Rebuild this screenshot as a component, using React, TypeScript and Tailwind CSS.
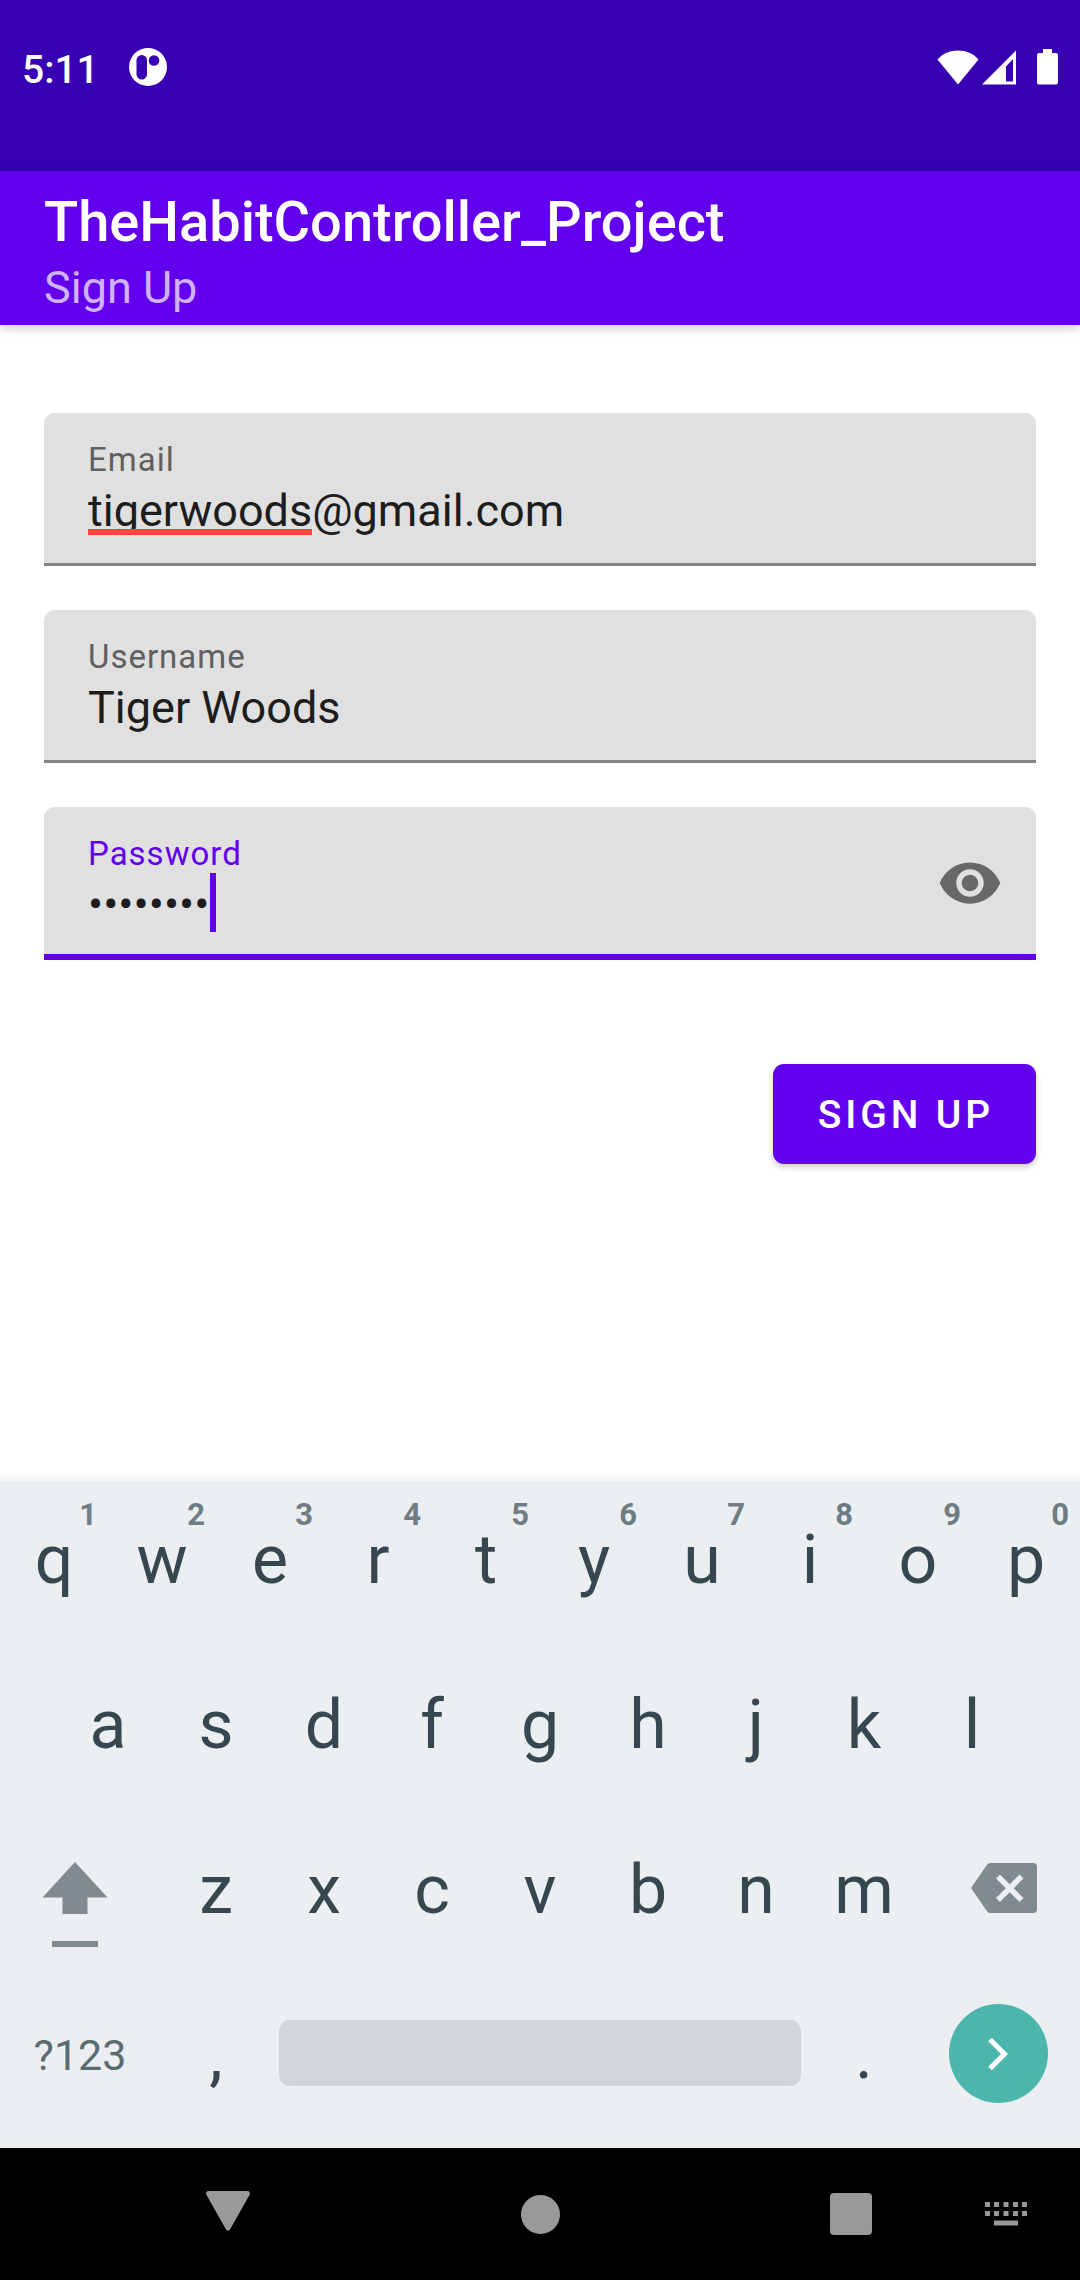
import { useState } from "react";
import type { ReactNode } from "react";

function StatusBar() {
  return (
    <div className="flex items-center bg-[#3700b3] pt-[43px] pr-[22px] pb-[80px] pl-[22px] text-white">
      <span className="pt-[6px] text-[39px] leading-[42px] font-medium">5:11</span>
      <svg className="ml-[30px] h-[38px] w-[38px]" viewBox="0 0 38 38" aria-hidden="true">
        <circle cx="19" cy="19" r="19" fill="#fff" />
        <rect x="7.5" y="7" width="10.5" height="24.5" rx="5.2" fill="#3700b3" />
        <circle cx="25" cy="12.5" r="5.3" fill="#3700b3" />
      </svg>
      <div className="ml-auto flex items-center">
        <svg className="h-[36px] w-[42px]" viewBox="0 0 42 36" aria-hidden="true">
          <path d="M21 35.5 0.5 10.5C5.500 4.500 13 1.500 21 1.500S36.500 4.500 41.500 10.500Z" fill="#fff" />
        </svg>
        <svg className="ml-[3px] h-[36px] w-[34px]" viewBox="0 0 34 36" aria-hidden="true">
          <path fillRule="evenodd" d="M34 1.500V35.500H0ZM31 10 24 17.500V32.500H31Z" fill="#fff" />
        </svg>
        <svg className="ml-[21px] h-[36px] w-[21px]" viewBox="0 0 21 36" aria-hidden="true">
          <path d="M6 0h9v4h4a2 2 0 0 1 2 2v27.500a2 2 0 0 1-2 2H2a2 2 0 0 1-2-2V6a2 2 0 0 1 2-2h4Z" fill="#fff" />
        </svg>
      </div>
    </div>
  );
}

type FieldProps = {
  id: string;
  label: string;
  type: string;
  value: string;
  onChange: (value: string) => void;
  active?: boolean;
  marker?: ReactNode;
  action?: ReactNode;
};

function Field({ id, label, type, value, onChange, active, marker, action }: FieldProps) {
  return (
    <div
      className={
        active
          ? "flex items-center rounded-t-[11px] border-b-[6px] border-[#6200ee] bg-[#e0e0e0] pr-[33px] pl-[44px]"
          : "flex items-center rounded-t-[11px] border-b-[3px] border-[#848484] bg-[#e0e0e0] px-[44px]"
      }
    >
      <div className={active ? "min-w-0 flex-1 pt-[25px] pb-[20px]" : "min-w-0 flex-1 pt-[25px] pb-[23px]"}>
        <label
          htmlFor={id}
          className={
            active
              ? "block text-[33px] leading-[44px] tracking-[1px] text-[#6200ee]"
              : "block text-[33px] leading-[44px] tracking-[1px] text-[#606060]"
          }
        >
          {label}
        </label>
        <div className="relative">
          <input
            id={id}
            type={type}
            value={value}
            spellCheck={false}
            autoComplete="off"
            onChange={(e) => onChange(e.target.value)}
            className="block h-[58px] w-full bg-transparent text-[45px] leading-[58px] text-[#1d1d1d] caret-transparent outline-none"
          />
          {marker}
        </div>
      </div>
      {action}
    </div>
  );
}

function Key({ label, hint }: { label: string; hint?: string }) {
  return (
    <button type="button" className="relative h-[165px] min-w-0 pt-[3px] text-[68px] leading-none text-[#37474f]">
      {hint && (
        <span className="absolute top-[23px] right-[11px] text-[31px] leading-[32px] font-bold text-[#6f7c82]">
          {hint}
        </span>
      )}
      {label}
    </button>
  );
}

const topRow = "qwertyuiop".split("");
const homeRow = "asdfghjkl".split("");
const bottomRow = "zxcvbnm".split("");

function Keyboard() {
  return (
    <section
      aria-label="Keyboard"
      className="bg-[#ebeff2] pb-[12px] shadow-[inset_0_5px_0_#f4f6f8,0_-1px_2px_rgba(0,0,0,0.03)]"
    >
      <div className="grid grid-cols-10">
        {topRow.map((k, i) => (
          <Key key={k} label={k} hint={String((i + 1) % 10)} />
        ))}
      </div>
      <div className="grid grid-cols-9 px-[5%]">
        {homeRow.map((k) => (
          <Key key={k} label={k} />
        ))}
      </div>
      <div className="grid grid-cols-[3fr_repeat(7,2fr)_3fr]">
        <button type="button" aria-label="Shift" className="flex items-center justify-center pt-[32px] pr-[12px]">
          <svg className="h-[86px] w-[66px]" viewBox="0 0 66 86">
            <path d="M33 0 65.500 35.500H45.500V52H20.500V35.500H0.500ZM10 79H56V85H10Z" fill="#808b8f" />
          </svg>
        </button>
        {bottomRow.map((k) => (
          <Key key={k} label={k} />
        ))}
        <button type="button" aria-label="Backspace" className="flex items-center justify-center pb-[2px] pl-[10px]">
          <svg className="h-[50px] w-[66px]" viewBox="0 0 66 50">
            <path d="M19 0H62a4 4 0 0 1 4 4V46a4 4 0 0 1-4 4H19q-2 0-3.500-2.500L0 25 15.500 2.500Q17 0 19 0Z" fill="#808b8f" />
            <path d="M27 13.500 50.500 37M50.500 13.500 27 37" stroke="#ebeff2" strokeWidth="5.5" />
          </svg>
        </button>
      </div>
      <div className="grid grid-cols-[3fr_2fr_10fr_2fr_3fr]">
        <button type="button" className="pt-[3px] pr-[2px] text-[43px] leading-none text-[#5b6b71]">
          ?123
        </button>
        <Key label="," />
        <div className="flex items-center px-[9px] pb-[2px]">
          <button type="button" aria-label="Space" className="h-[66px] w-full rounded-[11px] bg-[#d1d6d9]" />
        </div>
        <Key label="." />
        <div className="flex items-center justify-center pr-[2px]">
          <button
            type="button"
            aria-label="Next"
            className="flex size-[99px] items-center justify-center rounded-full bg-[#4db6ac]"
          >
            <svg className="h-[34px] w-[20px]" viewBox="0 0 20 34">
              <path d="M2 2.500 16.500 17 2 31.500" fill="none" stroke="#fff" strokeWidth="5" />
            </svg>
          </button>
        </div>
      </div>
    </section>
  );
}

function NavBar() {
  return (
    <nav
      aria-label="System"
      className="grid h-[132px] grid-cols-[146fr_164fr_460fr_162fr_148fr] items-center justify-items-center bg-black"
    >
      <span />
      <button type="button" aria-label="Back">
        <svg className="h-[46px] w-[46px]" viewBox="0 0 46 46">
          <path d="M3.500 0H42.500a2.500 2.500 0 0 1 2 4L25 38.500a2.300 2.300 0 0 1-4 0L1.500 4a2.500 2.500 0 0 1 2-4Z" fill="#999" />
        </svg>
      </button>
      <button type="button" aria-label="Home" className="size-[39px] rounded-full bg-[#999]" />
      <button type="button" aria-label="Recent apps" className="size-[42px] rounded-[4px] bg-[#999]" />
      <button type="button" aria-label="Switch keyboard">
        <svg className="h-[24px] w-[42px]" viewBox="0 0 42 24">
          <path
            d="M0 0h5v5H0ZM9 0h5v5H9ZM18.500 0h5v5h-5ZM28 0h5v5h-5ZM37 0h5v5h-5ZM0 9h5v5H0ZM9 9h5v5H9ZM18.500 9h5v5h-5ZM28 9h5v5h-5ZM37 9h5v5h-5ZM9 18.500h24v5H9Z"
            fill="#999"
          />
        </svg>
      </button>
    </nav>
  );
}

export default function App() {
  const [email, setEmail] = useState("tigerwoods@gmail.com");
  const [username, setUsername] = useState("Tiger Woods");
  const [password, setPassword] = useState("password");
  const [visible, setVisible] = useState(false);

  return (
    <div className="flex min-h-screen flex-col bg-white font-['Roboto',sans-serif]">
      <StatusBar />
      <header className="bg-[#6200ee] px-[44px] pt-[18px] pb-[4px] shadow-[0_3px_10px_rgba(0,0,0,0.2)]">
        <h1 className="text-[56px] leading-[66px] font-medium text-white">TheHabitController_Project</h1>
        <p className="text-[45px] leading-[66px] text-[#d0b2fa]">Sign Up</p>
      </header>
      <main className="flex-1 px-[44px] pt-[88px]">
        <form className="flex flex-col gap-[44px]" onSubmit={(e) => e.preventDefault()}>
          <Field
            id="email"
            label="Email"
            type="text"
            value={email}
            onChange={setEmail}
            marker={<span className="absolute top-[47px] left-0 h-[6px] w-[224px] bg-[#ff4444]" />}
          />
          <Field id="username" label="Username" type="text" value={username} onChange={setUsername} />
          <Field
            id="password"
            label="Password"
            type={visible ? "text" : "password"}
            value={password}
            onChange={setPassword}
            active
            marker={<span className="absolute -top-[3px] left-[122px] h-[59px] w-[6px] bg-[#6200ee]" />}
            action={
              <button type="button" aria-label="Show password" className="pt-[4px]" onClick={() => setVisible(!visible)}>
                <svg className="size-[66px]" viewBox="0 0 24 24" fill="#686868">
                  <path d="M12 4.500C7 4.500 2.730 7.610 1 12c1.730 4.390 6 7.500 11 7.500s9.270-3.110 11-7.500c-1.730-4.390-6-7.500-11-7.500zM12 17c-2.760 0-5-2.240-5-5s2.240-5 5-5 5 2.240 5 5-2.240 5-5 5zm0-8c-1.660 0-3 1.340-3 3s1.340 3 3 3 3-1.340 3-3-1.340-3-3-3z" />
                </svg>
              </button>
            }
          />
          <button
            type="submit"
            className="mt-[60px] self-end rounded-[11px] bg-[#6200ee] pt-[2px] pr-[42px] pl-[45px] text-[39px] leading-[98px] font-medium tracking-widest text-white shadow-[0_3px_6px_rgba(0,0,0,0.2)]"
          >
            SIGN UP
          </button>
        </form>
      </main>
      <Keyboard />
      <NavBar />
    </div>
  );
}
